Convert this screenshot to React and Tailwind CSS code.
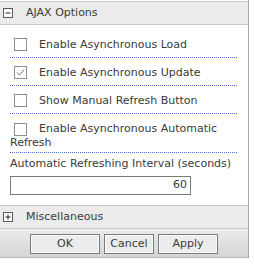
import React from 'react';

const Checkbox = ({ checked }) => (
    <span className="inline-flex w-[13px] h-[13px] shrink-0 items-center justify-center border border-[#8e8e8e] bg-white align-middle">
        {checked && (
            <svg width="11" height="11" viewBox="0 0 11 11">
                <path d="M2 5.5 L4.5 8 L9 3" fill="none" stroke="#6b6b6b" strokeWidth="1" />
            </svg>
        )}
    </span>
);

const ToggleBox = ({ sign }) => (
    <span className="flex w-[10px] h-[10px] items-center justify-center border border-[#5a5a5a] bg-white">
        <svg width="8" height="8" viewBox="0 0 8 8">
            <path d="M1.5 4 H6.5" stroke="#222" strokeWidth="1" />
            {sign === '+' && <path d="M4 1.5 V6.5" stroke="#222" strokeWidth="1" />}
        </svg>
    </span>
);

const SectionHeader = ({ sign, title }) => (
    <div className="flex h-[24px] items-center border-y border-[#c8c8c8] bg-[#ebebeb] pl-[3px]">
        <ToggleBox sign={sign} />
        <span className="ml-[13px]">{title}</span>
    </div>
);

const Row = ({ checked, label }) => (
    <div className="flex items-center border-b border-dotted border-[#4d74c4] pt-[8px] pb-[6px] pl-[4px]">
        <Checkbox checked={checked} />
        <span className="ml-[12px] leading-[13px]">{label}</span>
    </div>
);

const App = () => {
    return (
        <div className="w-[254px] h-[264px] bg-white text-[11px] text-[#3a3a3a] font-['DejaVu_Sans',sans-serif]">
            <div className="w-[249px] h-[258px] border-r border-[#a9a9a9] pt-px flex flex-col">
                <SectionHeader sign="-" title="AJAX Options" />

                {/* AJAX settings */}
                <div className="pl-[10px] pr-[11px] pt-[5px]">
                    <Row checked={false} label="Enable Asynchronous Load" />
                    <Row checked={true} label="Enable Asynchronous Update" />
                    <Row checked={false} label="Show Manual Refresh Button" />
                    <div className="border-b border-dotted border-[#4d74c4] pt-[8px] pb-[2px] leading-[14px]">
                        <span className="ml-[4px] mr-[12px] inline-block align-top">
                            <Checkbox checked={false} />
                        </span>
                        Enable Asynchronous Automatic Refresh
                    </div>
                    <div className="mt-[4px] leading-[14px]">Automatic Refreshing Interval (seconds)</div>
                    <div className="mt-[5px] flex h-[19px] w-[181px] items-center justify-end border border-[#7a7a7a] bg-white pr-[3px]">
                        60
                    </div>
                </div>

                <div className="mt-[10px]">
                    <SectionHeader sign="+" title="Miscellaneous" />
                </div>

                <div className="flex flex-1 items-start justify-center gap-[4px] border-b border-[#b4b4b4] bg-gradient-to-b from-[#ebebeb] to-[#d5d5d5] pt-[5px]">
                    <button className="h-[20px] w-[70px] border border-[#7b7b7b] bg-[#ececec] shadow-[inset_0_0_0_1px_#fafafa] text-[#3a3a3a]">OK</button>
                    <button className="h-[20px] w-[50px] border border-[#7b7b7b] bg-[#ececec] shadow-[inset_0_0_0_1px_#fafafa] text-[#3a3a3a]">Cancel</button>
                    <button className="h-[20px] w-[60px] border border-[#7b7b7b] bg-[#ececec] shadow-[inset_0_0_0_1px_#fafafa] text-[#3a3a3a]">Apply</button>
                </div>
            </div>
        </div>
    );
};

export default App;
